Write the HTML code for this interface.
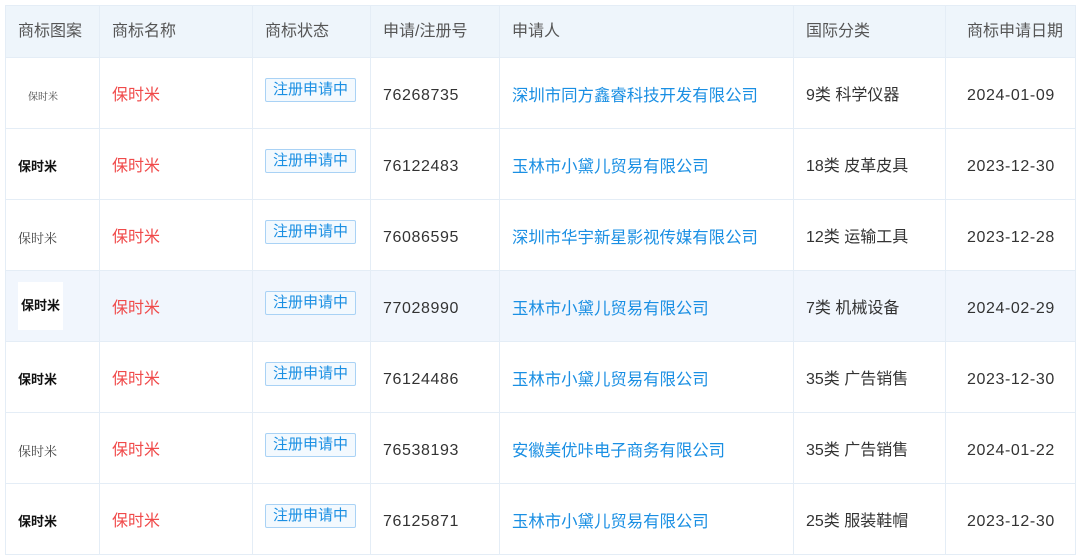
<!DOCTYPE html>
<html><head><meta charset="utf-8"><style>
body{margin:0;width:1080px;height:557px;background:#fff;overflow:hidden;font-family:"Liberation Sans","Noto Sans CJK SC",sans-serif;}
table{position:absolute;left:5px;top:5px;border-collapse:collapse;table-layout:fixed;width:1070px;}
td,th{border:1px solid #e4edf6;font-weight:normal;text-align:left;padding:0 0 0 12px;font-size:16px;line-height:20px;color:#333;white-space:nowrap;overflow:hidden;vertical-align:middle;}
th{height:51px;background:#eef5fb;color:#555;}
td{height:65px;padding-top:5px;}
td:last-child,th:last-child{padding-left:21px;}
tr.hl td{background:#f1f6fd;}
.n{letter-spacing:0.6px;}
.r{color:#f04a4a;}
.l{color:#1a8fe3;font-size:16.4px;}
.tag{display:inline-block;border:1px solid #a9d2f5;background:#f3f9fe;color:#1a8fe3;font-size:15px;padding:1px 7px;border-radius:2px;line-height:20px;position:relative;top:-6px;}
.p{font-size:13px;font-weight:bold;color:#111;}
.p1{font-size:10px;color:#444;font-family:"Noto Serif CJK SC",serif;padding-left:10px;}
.p2{font-size:13px;color:#444;font-family:"Noto Serif CJK SC",serif;}
.box{display:inline-block;background:#fff;padding:14px 3px;position:relative;top:-3px;}
</style></head><body>
<table>
<colgroup><col style="width:94px"><col style="width:153px"><col style="width:118px"><col style="width:129px"><col style="width:294px"><col style="width:152px"><col style="width:130px"></colgroup>
<tr><th>商标图案</th><th>商标名称</th><th>商标状态</th><th>申请/注册号</th><th>申请人</th><th>国际分类</th><th>商标申请日期</th></tr>
<tr><td><span class="p1">保时米</span></td><td class="r">保时米</td><td><span class="tag">注册申请中</span></td><td class="n">76268735</td><td class="l">深圳市同方鑫睿科技开发有限公司</td><td>9类 科学仪器</td><td class="n">2024-01-09</td></tr>
<tr><td class="p">保时米</td><td class="r">保时米</td><td><span class="tag">注册申请中</span></td><td class="n">76122483</td><td class="l">玉林市小黛儿贸易有限公司</td><td>18类 皮革皮具</td><td class="n">2023-12-30</td></tr>
<tr><td class="p2">保时米</td><td class="r">保时米</td><td><span class="tag">注册申请中</span></td><td class="n">76086595</td><td class="l">深圳市华宇新星影视传媒有限公司</td><td>12类 运输工具</td><td class="n">2023-12-28</td></tr>
<tr class="hl"><td class="p"><span class="box">保时米</span></td><td class="r">保时米</td><td><span class="tag">注册申请中</span></td><td class="n">77028990</td><td class="l">玉林市小黛儿贸易有限公司</td><td>7类 机械设备</td><td class="n">2024-02-29</td></tr>
<tr><td class="p">保时米</td><td class="r">保时米</td><td><span class="tag">注册申请中</span></td><td class="n">76124486</td><td class="l">玉林市小黛儿贸易有限公司</td><td>35类 广告销售</td><td class="n">2023-12-30</td></tr>
<tr><td class="p2">保时米</td><td class="r">保时米</td><td><span class="tag">注册申请中</span></td><td class="n">76538193</td><td class="l">安徽美优咔电子商务有限公司</td><td>35类 广告销售</td><td class="n">2024-01-22</td></tr>
<tr><td class="p">保时米</td><td class="r">保时米</td><td><span class="tag">注册申请中</span></td><td class="n">76125871</td><td class="l">玉林市小黛儿贸易有限公司</td><td>25类 服装鞋帽</td><td class="n">2023-12-30</td></tr>
</table>
</body></html>
